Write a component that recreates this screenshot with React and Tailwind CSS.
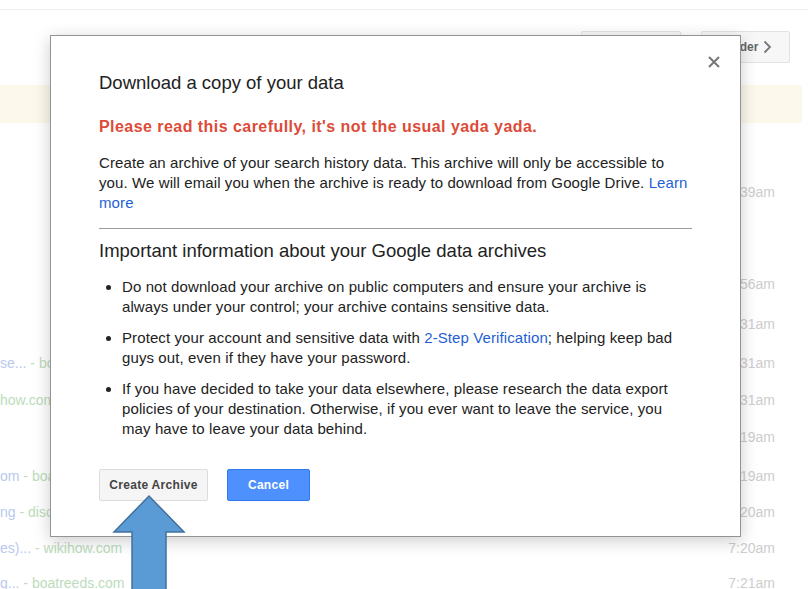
import React from "react";

const FONT = { fontFamily: '"Liberation Sans", Arial, sans-serif' };

const rows = [
  { h: "h-[40px]", time: "39am" },
  { h: "h-[52px]", time: "" },
  { h: "h-[40px]", time: "56am" },
  { h: "h-[40px]", time: "31am" },
  { h: "h-[38px]", time: "31am", title: "se...", site: " - boatreeds.com" },
  { h: "h-[36px]", time: "31am", site: "how.com" },
  { h: "h-[39px]", time: "19am" },
  { h: "h-[38px]", time: "19am", title: "om", site: " - boatreeds.com" },
  { h: "h-[35px]", time: "20am", title: "ng", site: " - discovery.com" },
  { h: "h-[36px]", time: "7:20am", title: "es)...", site: " - wikihow.com" },
  { h: "h-[34px]", time: "7:21am", title: "g...", site: " - boatreeds.com" },
];

function BackgroundPage() {
  return (
    <div className="flex flex-col">
      <div className="h-[9px]" />
      <div className="h-px bg-[#f0f0f0]" />
      <div className="h-[75px] flex items-start pt-[21px] pl-[581px] gap-[20px]">
        <div className="w-[100px] h-[32px] rounded-[2px] border border-[#e2e2e2] bg-[#f7f7f7]" />
        <div className="w-[89px] h-[32px] rounded-[2px] border border-[#e2e2e2] bg-[#f7f7f7] flex items-center pl-[25px] gap-[5px] text-[12px] font-bold text-[#666]">
          <span>Older</span>
          <svg width="9" height="14" viewBox="0 0 9 14">
            <path d="M1.5 1.5 L7 7 L1.5 12.5" fill="none" stroke="#777" strokeWidth="1.8" />
          </svg>
        </div>
      </div>
      <div className="h-[38px] w-[802px] bg-[#fcf8ec]" />
      <div className="h-[49px]" />
      {rows.map((r, i) => (
        <div key={i} className={`${r.h} flex items-center justify-between pr-[33px] text-[14px]`}>
          <div className="whitespace-nowrap">
            {r.title && <span className="text-[#b9c8ee]">{r.title}</span>}
            {r.site && <span className="text-[#bcdcbc]">{r.site}</span>}
          </div>
          <span className="text-[#cdcdcd]">{r.time}</span>
        </div>
      ))}
    </div>
  );
}

function Dialog() {
  return (
    <div className="absolute left-[50px] top-[35px] w-[691px] h-[502px] bg-white border border-[#939393] shadow-[0_4px_16px_rgba(0,0,0,0.2)] px-[48px] pt-[35px]">
      <button className="absolute right-[20px] top-[20px] w-[12px] h-[12px]">
        <svg width="12" height="12" viewBox="0 0 12 12">
          <path d="M1 1 L11 11 M11 1 L1 11" stroke="#777" strokeWidth="2" />
        </svg>
      </button>
      <h2 className="text-[18.5px] leading-[24px] text-[#222] whitespace-nowrap">Download a copy of your data</h2>
      <p className="mt-[22px] text-[16px] leading-[20px] font-bold tracking-[0.45px] text-[#dd4b39] whitespace-nowrap">
        Please read this carefully, it's not the usual yada yada.
      </p>
      <p className="mt-[16px] text-[15px] leading-[20px] tracking-[0.1px] text-[#222] whitespace-nowrap">
        Create an archive of your search history data. This archive will only be accessible to
        <br />
        you. We will email you when the archive is ready to download from Google Drive.{" "}
        <a className="text-[#1f5fd6]">Learn</a>
        <br />
        <a className="text-[#1f5fd6]">more</a>
      </p>
      <div className="mt-[15px] h-px bg-[#9c9c9c]" />
      <h3 className="mt-[10px] text-[18.5px] leading-[24px] text-[#222] whitespace-nowrap">
        Important information about your Google data archives
      </h3>
      <ul className="mt-[14px] pl-[23px] text-[15px] leading-[20px] tracking-[0.1px] text-[#222] list-disc whitespace-nowrap">
        <li>
          Do not download your archive on public computers and ensure your archive is
          <br />
          always under your control; your archive contains sensitive data.
        </li>
        <li className="mt-[11px]">
          Protect your account and sensitive data with{" "}
          <a className="text-[#1f5fd6]">2-Step Verification</a>; helping keep bad
          <br />
          guys out, even if they have your password.
        </li>
        <li className="mt-[11px]">
          If you have decided to take your data elsewhere, please research the data export
          <br />
          policies of your destination. Otherwise, if you ever want to leave the service, you
          <br />
          may have to leave your data behind.
        </li>
      </ul>
      <div className="mt-[30px] flex gap-[19px]">
        <button className="w-[109px] h-[32px] rounded-[2px] border border-[#dcdcdc] bg-[#f5f5f5] text-[12px] tracking-[0.3px] font-bold text-[#444]">
          Create Archive
        </button>
        <button className="w-[83px] h-[32px] rounded-[2px] border border-[#3079ed] bg-[#4d90fe] text-[12px] tracking-[0.3px] font-bold text-white">
          Cancel
        </button>
      </div>
    </div>
  );
}

export default function App() {
  return (
    <div className="relative w-[808px] h-[589px] overflow-hidden bg-white" style={FONT}>
      <BackgroundPage />
      <Dialog />
      <svg className="absolute left-0 top-0" width="808" height="589" viewBox="0 0 808 589">
        <path
          d="M149 496 L184 532 L166 532 L166 600 L132 600 L132 532 L114 532 Z"
          fill="#5b9bd5"
          stroke="#41719c"
          strokeWidth="1.5"
        />
      </svg>
    </div>
  );
}
